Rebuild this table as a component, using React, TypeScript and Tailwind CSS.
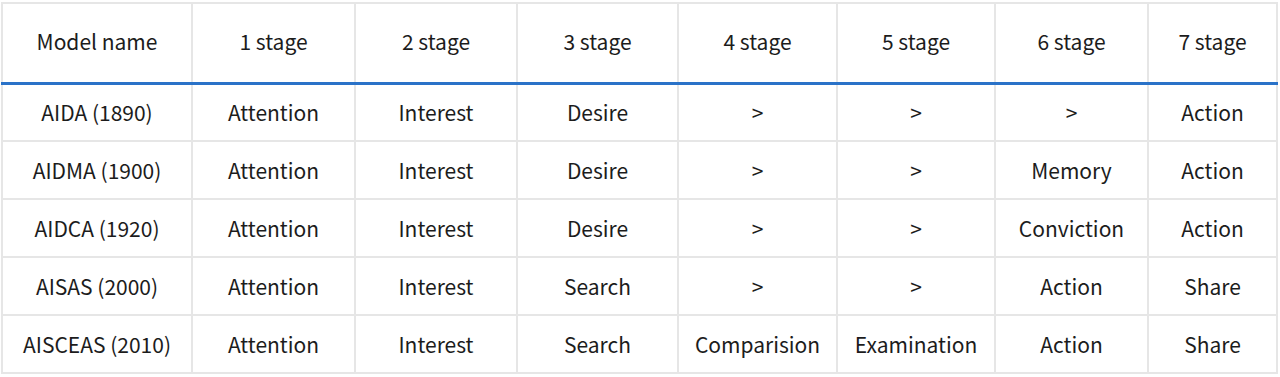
const headers = ['Model name', '1 stage', '2 stage', '3 stage', '4 stage', '5 stage', '6 stage', '7 stage']

const widths = ['w-[190px]', 'w-[163px]', 'w-[162px]', 'w-[161px]', 'w-[159px]', 'w-[158px]', 'w-[153px]', 'w-[129px]']

const rows = [
  ['AIDA (1890)', 'Attention', 'Interest', 'Desire', '>', '>', '>', 'Action'],
  ['AIDMA (1900)', 'Attention', 'Interest', 'Desire', '>', '>', 'Memory', 'Action'],
  ['AIDCA (1920)', 'Attention', 'Interest', 'Desire', '>', '>', 'Conviction', 'Action'],
  ['AISAS (2000)', 'Attention', 'Interest', 'Search', '>', '>', 'Action', 'Share'],
  ['AISCEAS (2010)', 'Attention', 'Interest', 'Search', 'Comparision', 'Examination', 'Action', 'Share'],
]

export default function App() {
  return (
    <div className="bg-white pl-px pt-[2px] w-[1280px] h-[377px] overflow-hidden">
      <table
        className="table-fixed border-collapse w-[1275px] text-[21px] leading-none text-[#1c1c1c]"
        style={{ fontFamily: '"Noto Sans CJK KR", "Noto Sans", sans-serif' }}
      >
        <thead>
          <tr className="h-[80px]">
            {headers.map((h, i) => (
              <th
                key={h}
                className={`${widths[i]} border-2 border-[#e6e6e6] border-b-[3px] border-b-[#2a72c8] font-normal text-center pb-[2px]`}
              >
                {h}
              </th>
            ))}
          </tr>
        </thead>
        <tbody>
          {rows.map((row) => (
            <tr key={row[0]} className="h-[58px]">
              {row.map((cell, i) => (
                <td key={i} className="border-2 border-[#e6e6e6] text-center p-0 pt-[1px]">
                  {cell}
                </td>
              ))}
            </tr>
          ))}
        </tbody>
      </table>
    </div>
  )
}
